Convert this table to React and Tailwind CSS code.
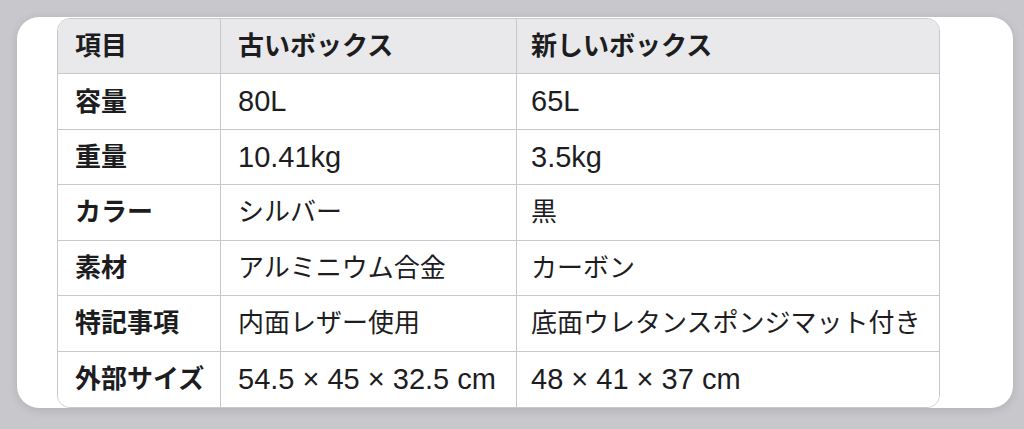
import React from 'react';

const rows = [
    ['容量', '80L', '65L'],
    ['重量', '10.41kg', '3.5kg'],
    ['カラー', 'シルバー', '黒'],
    ['素材', 'アルミニウム合金', 'カーボン'],
    ['特記事項', '内面レザー使用', '底面ウレタンスポンジマット付き'],
    ['外部サイズ', '54.5 × 45 × 32.5 cm', '48 × 41 × 37 cm'],
];

const header = ['項目', '古いボックス', '新しいボックス'];

// latin-only values look a bit larger than the kana in the screenshot
const isLatin = (s) => /^[\x00-\x7f×]+$/.test(s);

const Cell = ({ children, bold, last, lastRow, head }) => (
    <div
        className={`flex items-center leading-none whitespace-nowrap ${
            isLatin(children) ? 'text-[29px]' : 'text-[26px]'
        } ${bold ? 'font-bold' : 'font-normal'} ${last ? 'pl-[14px]' : 'pl-[17px] border-r border-[#c8c8cc]'} ${
            lastRow ? '' : 'border-b border-[#c8c8cc]'
        } ${head ? 'bg-[#e9e9ec]' : 'bg-white'}`}
    >
        {children}
    </div>
);

export default function App() {
    return (
        <div className="w-[1024px] h-[429px] bg-[#c8c7cc] pt-[17px] pl-[17px] pr-[11px] pb-[21px] font-['Liberation_Sans','Noto_Sans_CJK_JP',sans-serif] text-[#1d1d1f]">
            <div className="h-full rounded-[22px] bg-white pl-[40px] pt-[1px] shadow-[0_2px_10px_rgba(0,0,0,0.12)]">
                <div className="w-[883px] h-[390px] grid grid-cols-[163px_296px_1fr] grid-rows-[repeat(7,1fr)] rounded-[13px] border border-[#c8c8cc] overflow-hidden">
                    {header.map((h, i) => (
                        <Cell key={h} bold head last={i === 2}>
                            {h}
                        </Cell>
                    ))}
                    {rows.map((r, ri) =>
                        r.map((c, ci) => (
                            <Cell key={ri + '-' + ci} bold={ci === 0} last={ci === 2} lastRow={ri === rows.length - 1}>
                                {c}
                            </Cell>
                        ))
                    )}
                </div>
            </div>
        </div>
    );
}
